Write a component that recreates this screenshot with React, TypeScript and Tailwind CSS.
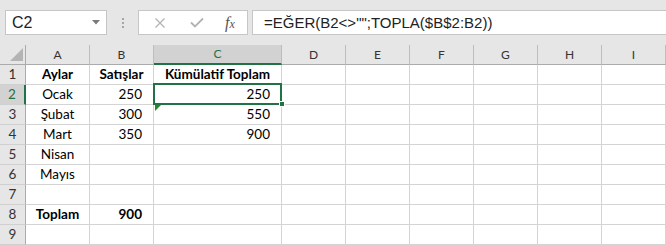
import React from 'react';

type Cell = { text?: string; align?: 'left' | 'center' | 'right'; bold?: boolean };

const columns = [
  { name: 'A', width: 'w-[64px]' },
  { name: 'B', width: 'w-[64px]' },
  { name: 'C', width: 'w-[128px]' },
  { name: 'D', width: 'w-[64px]' },
  { name: 'E', width: 'w-[64px]' },
  { name: 'F', width: 'w-[64px]' },
  { name: 'G', width: 'w-[64px]' },
  { name: 'H', width: 'w-[64px]' },
  { name: 'I', width: 'w-[64px]' },
];

const rows: Cell[][] = [
  [
    { text: 'Aylar', align: 'center', bold: true },
    { text: 'Satışlar', align: 'center', bold: true },
    { text: 'Kümülatif Toplam', align: 'center', bold: true },
  ],
  [{ text: 'Ocak', align: 'center' }, { text: '250', align: 'right' }, { text: '250', align: 'right' }],
  [{ text: 'Şubat', align: 'center' }, { text: '300', align: 'right' }, { text: '550', align: 'right' }],
  [{ text: 'Mart', align: 'center' }, { text: '350', align: 'right' }, { text: '900', align: 'right' }],
  [{ text: 'Nisan', align: 'center' }],
  [{ text: 'Mayıs', align: 'center' }],
  [],
  [{ text: 'Toplam', align: 'center', bold: true }, { text: '900', align: 'right', bold: true }],
  [],
];

const cellFont = { fontFamily: '"Lato", "Liberation Sans", sans-serif' };

const FormulaBar = () => (
  <div className="h-[45px] bg-[#e6e6e6] flex items-start pt-[10px] pl-[5px]">
    {/* Name box */}
    <div className="w-[102px] h-[25px] bg-white border border-[#c6c6c6] flex items-center justify-between pl-[6px] pr-[6px]">
      <span className="text-[16px] text-[#222] leading-none" style={{ fontFamily: '"Liberation Sans", sans-serif' }}>C2</span>
      <svg width="8" height="5" viewBox="0 0 8 5">
        <path d="M0 0 L8 0 L4 4.5 Z" fill="#7a7a7a" />
      </svg>
    </div>
    {/* dots */}
    <div className="w-[31px] h-[25px] flex flex-col items-center justify-center gap-[2px]">
      <span className="w-[2px] h-[2px] bg-[#a6a6a6]" />
      <span className="w-[2px] h-[2px] bg-[#a6a6a6]" />
      <span className="w-[2px] h-[2px] bg-[#a6a6a6]" />
    </div>
    {/* cancel / enter / fx */}
    <div className="w-[110px] h-[25px] bg-white border border-[#c6c6c6] flex items-center">
      <svg className="ml-[15px]" width="12" height="12" viewBox="0 0 12 12">
        <path d="M1.5 1.5 L10.5 10.5 M10.5 1.5 L1.5 10.5" stroke="#b3b3b3" strokeWidth="1.3" fill="none" />
      </svg>
      <svg className="ml-[24px]" width="14" height="11" viewBox="0 0 14 11">
        <path d="M1 5.5 L5 9.5 L13 1.5" stroke="#b3b3b3" strokeWidth="1.8" fill="none" />
      </svg>
      <span
        className="ml-[21px] text-[16px] italic text-[#555] leading-none"
        style={{ fontFamily: '"Liberation Serif", serif' }}
      >
        f<span className="text-[12px]">x</span>
      </span>
    </div>
    {/* formula input */}
    <div className="ml-[4px] flex-1 h-[25px] bg-white border border-r-0 border-[#c6c6c6] flex items-center pl-[11px]">
      <span className="text-[15px] text-[#222] leading-none whitespace-nowrap" style={{ fontFamily: '"Liberation Sans", sans-serif' }}>
        =EĞER(B2&lt;&gt;"";TOPLA($B$2:B2))
      </span>
    </div>
  </div>
);

const HeaderRow = () => (
  <div className="flex h-[20px]">
    <div className="w-[26px] h-[20px] border-r border-b border-[#ababab] bg-[#e6e6e6] relative">
      <svg className="absolute left-[10px] top-[3px]" width="13" height="13" viewBox="0 0 13 13">
        <path d="M13 0 L13 13 L0 13 Z" fill="#b4b4b4" />
      </svg>
    </div>
    {columns.map((c) => {
      const selected = c.name === 'C';
      return (
        <div
          key={c.name}
          className={`${c.width} shrink-0 h-[20px] border-r border-[#bdbdbd] flex items-center justify-center text-[12px] ${
            selected ? 'bg-[#d2d2d2] text-[#217346] border-b-2 border-b-[#217346]' : 'bg-[#e6e6e6] text-[#333] border-b border-b-[#ababab]'
          }`}
          style={cellFont}
        >
          {c.name}
        </div>
      );
    })}
  </div>
);

const App = () => {
  return (
    <div className="w-[666px] h-[245px] overflow-hidden bg-white relative select-none">
      <FormulaBar />
      <HeaderRow />
      {rows.map((row, r) => {
        const rowSelected = r === 1;
        return (
          <div key={r} className="flex h-[20px]">
            <div
              className={`w-[26px] shrink-0 h-[20px] border-b border-[#d0d0d0] flex items-end justify-center pb-[3px] text-[13.5px] leading-none ${
                rowSelected
                  ? 'bg-[#d2d2d2] text-[#217346] border-r-2 border-r-[#217346]'
                  : 'bg-[#e6e6e6] text-[#333] border-r border-r-[#ababab]'
              }`}
              style={cellFont}
            >
              {r + 1}
            </div>
            {columns.map((c, ci) => {
              const cell = row[ci];
              const align =
                cell?.align === 'right' ? 'justify-end pr-[11px]' : cell?.align === 'center' ? 'justify-center' : 'justify-start pl-[3px]';
              return (
                <div
                  key={c.name}
                  className={`${c.width} shrink-0 h-[20px] border-r border-b border-[#d4d4d4] flex items-end pb-[3px] ${align} text-[13.5px] leading-none text-black whitespace-nowrap overflow-visible ${
                    cell?.bold ? 'font-bold' : ''
                  }`}
                  style={cellFont}
                >
                  {cell?.text}
                </div>
              );
            })}
          </div>
        );
      })}

      {/* active cell C2 outline */}
      <div className="absolute left-[153px] top-[83px] w-[129px] h-[22px] border-2 border-[#217346] pointer-events-none" />
      <div className="absolute left-[279px] top-[101px] w-[6px] h-[6px] bg-[#217346] border border-white pointer-events-none" />
      {/* error indicator on C3 */}
      <svg className="absolute left-[155px] top-[105px] pointer-events-none" width="6" height="6" viewBox="0 0 6 6">
        <path d="M0 0 L6 0 L0 6 Z" fill="#1f8a1f" />
      </svg>
    </div>
  );
};

export default App;
